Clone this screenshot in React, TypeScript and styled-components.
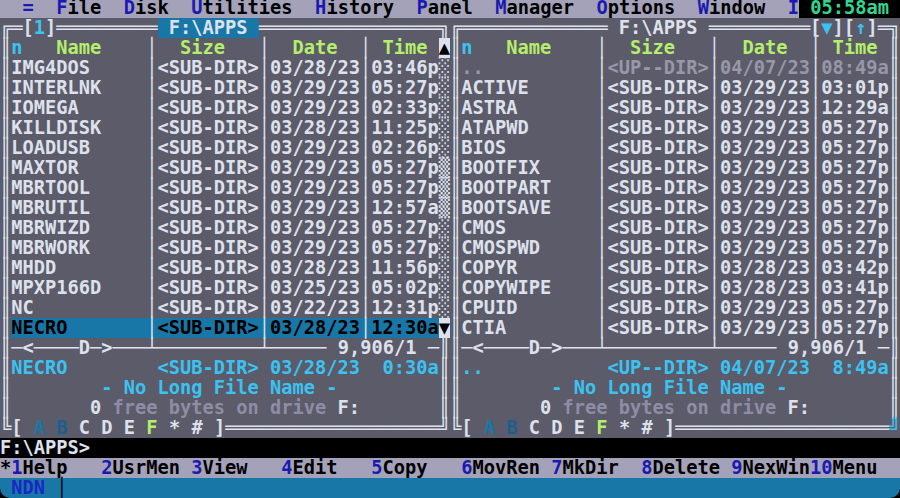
import styled, { createGlobalStyle } from "styled-components";

// 80x25 text screen scaled to 900x498 (first row is cut to 18px)
const CH = 11.25;
const ch = (n: number) => `${n * CH}px`;

const colors = {
  panel: "#5c5b69",
  bar: "#a4a2b8",
  white: "#dde1ec",
  dim: "#9897a9",
  muted: "#8e8da6",
  cyan: "#3ac3f2",
  green: "#b4ee6a",
  blue: "#1877a7",
  blueDark: "#1b5f8f",
  hot: "#1a1ab2",
  black: "#000000",
  clock: "#31d590",
  ndn: "#1b26c4",
};

const GlobalStyle = createGlobalStyle`
  *, *::before, *::after { box-sizing: border-box; }
  html, body { margin: 0; padding: 0; background: #000; overflow: hidden; }
`;

const Screen = styled.div`
  width: 900px;
  height: 498px;
  display: flex;
  flex-direction: column;
  background: #000;
  font-family: "DejaVu Sans Mono", "Liberation Mono", monospace;
  font-size: 18.69px;
  font-weight: 700;
  line-height: 20px;
  white-space: pre;
`;

/* ---------- menu ---------- */

const MenuBar = styled.header`
  display: flex;
  height: 18px;
  line-height: 16px;
  background: ${colors.bar};
  color: ${colors.black};
`;

const MenuList = styled.nav`
  flex: 1;
  display: flex;
  gap: ${ch(2)};
  padding-left: ${ch(2)};
`;

const Hot = styled.span`
  color: ${colors.hot};
`;

const Clock = styled.div`
  width: ${ch(9)};
  padding-left: ${ch(1)};
  background: #000;
  color: ${colors.clock};
`;

const menuItems = ["=", "File", "Disk", "Utilities", "History", "Panel", "Manager", "Options", "Window", "I"];

/* ---------- panels ---------- */

const Panels = styled.main`
  display: grid;
  grid-template-columns: ${ch(40)} ${ch(40)};
  background: ${colors.panel};
  color: ${colors.white};
`;

const Panel = styled.section`
  display: flex;
  flex-direction: column;
`;

const Line = styled.div`
  display: flex;
  height: 20px;
`;

const Frame = styled.span<{ $c?: string }>`
  font-weight: 400;
  color: ${(p) => p.$c ?? colors.white};
`;

const Ink = styled.span<{ $c?: string }>`
  color: ${(p) => p.$c ?? colors.white};
`;

const Title = styled.span<{ $active?: boolean }>`
  color: ${colors.white};
  background: ${(p) => (p.$active ? colors.blue : "transparent")};
`;

const Middle = styled.span`
  width: ${ch(38)};
`;

const Columns = styled.div`
  display: grid;
  grid-template-columns:
    ${ch(1)} ${ch(12)} ${ch(1)} ${ch(9)} ${ch(1)}
    ${ch(8)} ${ch(1)} ${ch(6)} ${ch(1)};
  height: 20px;
`;

const Cell = styled.span<{ $c?: string; $bg?: string }>`
  color: ${(p) => p.$c ?? colors.white};
  background: ${(p) => p.$bg ?? "transparent"};
`;

const Sep = styled(Cell)`
  font-weight: 400;
`;

const Scroll = styled.span<{ $part: "arrow" | "track" | "thumb" }>`
  font-weight: 400;
  color: ${(p) => (p.$part === "arrow" ? "#000" : colors.white)};
  background: ${(p) => (p.$part === "arrow" ? colors.white : "transparent")};
`;

type Entry = [string, string, string, string];

const leftFiles: Entry[] = [
  ["IMG4DOS", "<SUB-DIR>", "03/28/23", "03:46p"],
  ["INTERLNK", "<SUB-DIR>", "03/29/23", "05:27p"],
  ["IOMEGA", "<SUB-DIR>", "03/29/23", "02:33p"],
  ["KILLDISK", "<SUB-DIR>", "03/28/23", "11:25p"],
  ["LOADUSB", "<SUB-DIR>", "03/29/23", "02:26p"],
  ["MAXTOR", "<SUB-DIR>", "03/29/23", "05:27p"],
  ["MBRTOOL", "<SUB-DIR>", "03/29/23", "05:27p"],
  ["MBRUTIL", "<SUB-DIR>", "03/29/23", "12:57a"],
  ["MBRWIZD", "<SUB-DIR>", "03/29/23", "05:27p"],
  ["MBRWORK", "<SUB-DIR>", "03/29/23", "05:27p"],
  ["MHDD", "<SUB-DIR>", "03/28/23", "11:56p"],
  ["MPXP166D", "<SUB-DIR>", "03/25/23", "05:02p"],
  ["NC", "<SUB-DIR>", "03/22/23", "12:31p"],
  ["NECRO", "<SUB-DIR>", "03/28/23", "12:30a"],
];

const rightFiles: Entry[] = [
  ["..", "<UP--DIR>", "04/07/23", "08:49a"],
  ["ACTIVE", "<SUB-DIR>", "03/29/23", "03:01p"],
  ["ASTRA", "<SUB-DIR>", "03/29/23", "12:29a"],
  ["ATAPWD", "<SUB-DIR>", "03/29/23", "05:27p"],
  ["BIOS", "<SUB-DIR>", "03/29/23", "05:27p"],
  ["BOOTFIX", "<SUB-DIR>", "03/29/23", "05:27p"],
  ["BOOTPART", "<SUB-DIR>", "03/29/23", "05:27p"],
  ["BOOTSAVE", "<SUB-DIR>", "03/29/23", "05:27p"],
  ["CMOS", "<SUB-DIR>", "03/29/23", "05:27p"],
  ["CMOSPWD", "<SUB-DIR>", "03/29/23", "05:27p"],
  ["COPYR", "<SUB-DIR>", "03/28/23", "03:42p"],
  ["COPYWIPE", "<SUB-DIR>", "03/28/23", "03:41p"],
  ["CPUID", "<SUB-DIR>", "03/29/23", "05:27p"],
  ["CTIA", "<SUB-DIR>", "03/29/23", "05:27p"],
];

const drives: [string, string][] = [
  ["A", colors.blue],
  ["B", colors.blueDark],
  ["C", colors.white],
  ["D", colors.white],
  ["E", colors.white],
  ["F", colors.green],
  ["*", colors.white],
  ["#", colors.white],
];

interface PanelProps {
  side: "left" | "right";
  files: Entry[];
  selected?: number;
  info: Entry;
}

function FilePanel({ side, files, selected, info }: PanelProps) {
  const left = side === "left";
  const rows = files.length;

  const edge = (i: number) => {
    if (!left) return <Frame>║</Frame>;
    if (i === -1) return <Scroll $part="arrow">▲</Scroll>;
    if (i === rows - 1) return <Scroll $part="arrow">▼</Scroll>;
    const thumb = i >= 5 && i <= 7;
    return <Scroll $part={thumb ? "thumb" : "track"}>{thumb ? "▒" : "░"}</Scroll>;
  };

  return (
    <Panel>
      {left ? (
        <Line>
          <Frame>╔═</Frame>
          <Ink>[</Ink>
          <Ink $c={colors.cyan}>1</Ink>
          <Ink>]</Ink>
          <Frame>{"═".repeat(9)}</Frame>
          <Title $active>{" F:\\APPS "}</Title>
          <Frame>{"═".repeat(16)}╗</Frame>
        </Line>
      ) : (
        <Line>
          <Frame>╔{"═".repeat(13)}</Frame>
          <Title>{" F:\\APPS "}</Title>
          <Frame>{"═".repeat(9)}</Frame>
          <Ink>[</Ink>
          <Ink $c={colors.cyan}>▼</Ink>
          <Ink>][</Ink>
          <Ink $c={colors.cyan}>↑</Ink>
          <Ink>]</Ink>
          <Frame>═╗</Frame>
        </Line>
      )}

      <Columns>
        <Frame>║</Frame>
        <Cell>
          <Ink $c={colors.cyan}>n</Ink>
          <Ink $c={colors.green}>{"   Name"}</Ink>
        </Cell>
        <Sep>│</Sep>
        <Cell $c={colors.green}>{"  Size"}</Cell>
        <Sep>│</Sep>
        <Cell $c={colors.green}>{"  Date"}</Cell>
        <Sep>│</Sep>
        <Cell $c={colors.green}>{" Time"}</Cell>
        {edge(-1)}
      </Columns>

      {files.map(([name, size, date, time], i) => {
        const sel = i === selected;
        const bg = sel ? colors.blue : undefined;
        const fg = sel ? colors.black : name === ".." ? colors.dim : colors.white;
        return (
          <Columns key={name}>
            <Frame>║</Frame>
            <Cell $c={fg} $bg={bg}>{name}</Cell>
            <Sep $bg={bg}>│</Sep>
            <Cell $c={fg} $bg={bg}>{size}</Cell>
            <Sep $bg={bg}>│</Sep>
            <Cell $c={fg} $bg={bg}>{date}</Cell>
            <Sep $bg={bg}>│</Sep>
            <Cell $c={fg} $bg={bg}>{time}</Cell>
            {edge(i)}
          </Columns>
        );
      })}

      <Line>
        <Frame>║─</Frame>
        <Ink>&lt;</Ink>
        <Frame>────</Frame>
        <Ink>D</Ink>
        <Frame>─</Frame>
        <Ink>&gt;</Ink>
        <Frame>───┴─────────┴─────</Frame>
        <Ink>{" 9,906/1 "}</Ink>
        <Frame>─║</Frame>
      </Line>

      <Columns>
        <Frame>║</Frame>
        <Cell $c={colors.cyan}>{info[0]}</Cell>
        <Cell />
        <Cell $c={colors.cyan}>{info[1]}</Cell>
        <Cell />
        <Cell $c={colors.cyan}>{info[2]}</Cell>
        <Cell />
        <Cell $c={colors.cyan}>{info[3]}</Cell>
        <Frame>║</Frame>
      </Columns>

      <Line>
        <Frame>║</Frame>
        <Middle>
          <Ink $c={colors.cyan}>{"        - No Long File Name -"}</Ink>
        </Middle>
        <Frame>║</Frame>
      </Line>

      <Line>
        <Frame>║</Frame>
        <Middle>
          {"       "}
          <Ink>0</Ink>
          <Ink $c={colors.muted}>{" free bytes on drive "}</Ink>
          <Ink>F:</Ink>
        </Middle>
        <Frame>║</Frame>
      </Line>

      <Line>
        <Frame>╚</Frame>
        <Ink>[ </Ink>
        {drives.map(([d, c]) => (
          <Ink key={d} $c={c}>
            {d + " "}
          </Ink>
        ))}
        <Ink>]</Ink>
        <Frame>{"═".repeat(19)}</Frame>
        <Frame $c={left ? colors.white : colors.cyan}>╝</Frame>
      </Line>
    </Panel>
  );
}

/* ---------- bottom ---------- */

const CommandLine = styled.div`
  height: 20px;
  background: #000;
  color: ${colors.white};
`;

const KeyBar = styled.footer`
  display: flex;
  height: 20px;
  background: ${colors.bar};
  color: ${colors.black};
`;

const Key = styled.span<{ $w: number }>`
  width: ${(p) => ch(p.$w)};
`;

const StatusBar = styled.div`
  display: flex;
  height: 20px;
  padding-left: ${ch(1)};
  background: ${colors.blue};
  color: ${colors.ndn};
  border-radius: 0 0 10px 10px;
`;

const Cursor = styled.span`
  margin-left: ${ch(1)};
  color: #000;
`;

const keys: [string, string, number][] = [
  ["1", "Help", 8],
  ["2", "UsrMen", 8],
  ["3", "View", 8],
  ["4", "Edit", 8],
  ["5", "Copy", 8],
  ["6", "MovRen", 8],
  ["7", "MkDir", 8],
  ["8", "Delete", 8],
  ["9", "NexWin", 7],
  ["10", "Menu", 6],
];

export default function App() {
  return (
    <>
      <GlobalStyle />
      <Screen>
        <MenuBar>
          <MenuList>
            {menuItems.map((m) => (
              <span key={m}>
                <Hot>{m[0]}</Hot>
                {m.slice(1)}
              </span>
            ))}
          </MenuList>
          <Clock>05:58am</Clock>
        </MenuBar>

        <Panels>
          <FilePanel side="left" files={leftFiles} selected={13} info={["NECRO", "<SUB-DIR>", "03/28/23", " 0:30a"]} />
          <FilePanel side="right" files={rightFiles} info={["..", "<UP--DIR>", "04/07/23", " 8:49a"]} />
        </Panels>

        <CommandLine>{"F:\\APPS>"}</CommandLine>

        <KeyBar>
          <Key $w={1}>*</Key>
          {keys.map(([n, label, w]) => (
            <Key key={n} $w={w}>
              <Hot>{n}</Hot>
              {label}
            </Key>
          ))}
        </KeyBar>

        <StatusBar>
          NDN
          <Cursor>│</Cursor>
        </StatusBar>
      </Screen>
    </>
  );
}
